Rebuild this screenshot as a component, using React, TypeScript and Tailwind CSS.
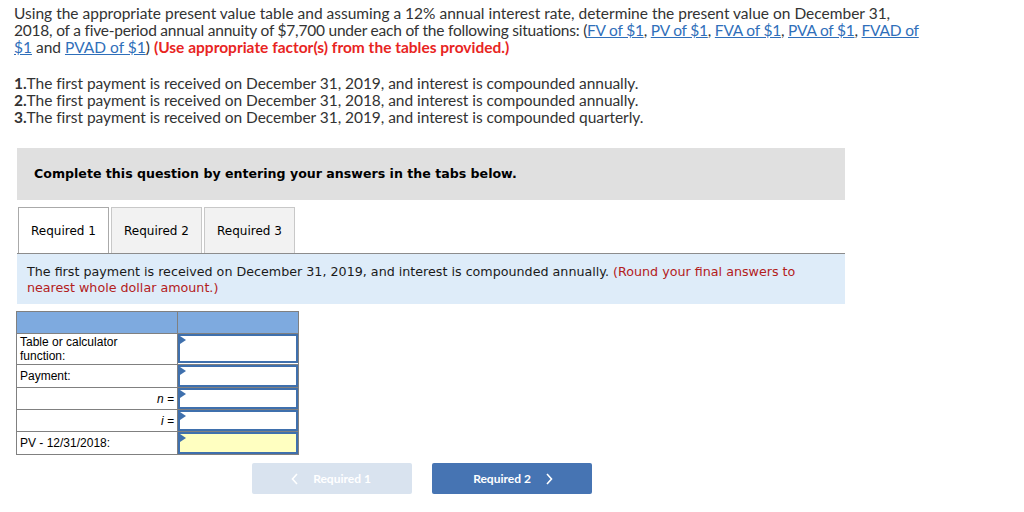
import React from "react";

const link = "text-[#2f6fba] underline";

function Cell({ yellow = false, h }: { yellow?: boolean; h: string }) {
  return (
    <td className="p-0 border border-[#808080] align-top">
      <div className={`relative ${h} border-2 border-[#3f70ad] ${yellow ? "bg-[#ffffc1]" : "bg-white"}`}>
        <span className="absolute left-0 top-0 w-0 h-0 border-t-[4px] border-b-[4px] border-l-[6px] border-t-transparent border-b-transparent border-l-[#3f70ad]" />
      </div>
    </td>
  );
}

function Chevron({ dir }: { dir: "l" | "r" }) {
  return (
    <svg width="8" height="12" viewBox="0 0 8 12" fill="none" stroke="currentColor" strokeWidth="1.6">
      {dir === "l" ? <path d="M6 1 L1.5 6 L6 11" /> : <path d="M2 1 L6.5 6 L2 11" />}
    </svg>
  );
}

export default function App() {
  return (
    <div className="w-[1024px] h-[512px] bg-white relative overflow-hidden">
      <div className="pl-[14px] pt-[5px] text-[15.5px] leading-[17px] text-[#333] font-['Lato','Open_Sans',sans-serif]">
        <p className="w-[990px] whitespace-nowrap">
          Using the appropriate present value table and assuming a 12% annual interest rate, determine the present value on December 31,
          <br />
          <span className="tracking-[-0.22px]">
            2018, of a five-period annual annuity of $7,700 under each of the following situations: (<span className={link}>FV of $1</span>,{" "}
            <span className={link}>PV of $1</span>, <span className={link}>FVA of $1</span>, <span className={link}>PVA of $1</span>,{" "}
            <span className={link}>FVAD of</span>
          </span>
          <br />
          <span className={link}>$1</span> and <span className={link}>PVAD of $1</span>){" "}
          <span className="font-bold text-[#e8251f]">(Use appropriate factor(s) from the tables provided.)</span>
        </p>
        <div className="mt-[19px] tracking-[-0.05px]">
          <p><b>1.</b>The first payment is received on December 31, 2019, and interest is compounded annually.</p>
          <p><b>2.</b>The first payment is received on December 31, 2018, and interest is compounded annually.</p>
          <p><b>3.</b>The first payment is received on December 31, 2019, and interest is compounded quarterly.</p>
        </div>
      </div>

      <div className="ml-[17px] w-[828px] mt-[22px] font-['DejaVu_Sans',Verdana,sans-serif]">
        <div className="h-[52px] bg-[#e0e0e0] flex items-center pl-[17px] text-[12.6px] font-bold text-black">
          Complete this question by entering your answers in the tabs below.
        </div>
        <div className="mt-[7px] flex gap-[2px] pl-[1px] border-b border-[#8c8c8c] text-[12px] text-black">
          <div className="w-[91px] h-[46px] border border-b-0 border-[#aaa] bg-white flex items-center justify-center -mb-px">
            Required 1
          </div>
          <div className="w-[91px] h-[46px] border border-b-0 border-[#c8c8c8] bg-[#f2f2f2] flex items-center justify-center">
            Required 2
          </div>
          <div className="w-[91px] h-[46px] border border-b-0 border-[#c8c8c8] bg-[#f2f2f2] flex items-center justify-center">
            Required 3
          </div>
        </div>
        <div className="bg-[#deecf9] h-[50px] pl-[10px] pr-[40px] pt-[10px] text-[12.7px] leading-[16px] text-[#1a1a1a]">
          The first payment is received on December 31, 2019, and interest is compounded annually.{" "}
          <span className="text-[#b3201c]">(Round your final answers to nearest whole dollar amount.)</span>
        </div>
      </div>

      <table className="ml-[16px] mt-[7px] border-collapse font-['Liberation_Sans',Arial,sans-serif] text-[12px] leading-[14px] text-black">
        <tbody>
          <tr className="bg-[#7eaadf] h-[22px]">
            <td className="w-[161px] border border-[#808080]" />
            <td className="w-[121px] border border-[#808080]" />
          </tr>
          <tr>
            <td className="border border-[#808080] px-[3px] py-[1px] align-top">Table or calculator<br />function:</td>
            <Cell h="h-[29px]" />
          </tr>
          <tr>
            <td className="border border-[#808080] px-[3px] align-middle">Payment:</td>
            <Cell h="h-[22px]" />
          </tr>
          <tr>
            <td className="border border-[#808080] px-[3px] text-right italic">n =</td>
            <Cell h="h-[21px]" />
          </tr>
          <tr>
            <td className="border border-[#808080] px-[3px] text-right italic">i =</td>
            <Cell h="h-[21px]" />
          </tr>
          <tr>
            <td className="border border-[#808080] px-[3px]">PV - 12/31/2018:</td>
            <Cell yellow h="h-[22px]" />
          </tr>
        </tbody>
      </table>

      <div className="mt-[8px] ml-[252px] flex gap-[20px] font-['Lato',sans-serif] text-[12px] font-bold text-white">
        <div className="w-[160px] h-[31px] rounded-[2px] bg-[#d9e3ef] flex items-center justify-center gap-[14px] pr-[2px]">
          <Chevron dir="l" />
          <span>Required 1</span>
        </div>
        <div className="w-[160px] h-[31px] rounded-[2px] bg-[#4674b3] flex items-center justify-center gap-[14px] pl-[2px]">
          <span>Required 2</span>
          <Chevron dir="r" />
        </div>
      </div>
    </div>
  );
}
